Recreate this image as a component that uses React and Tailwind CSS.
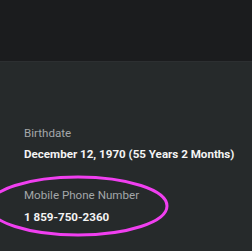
export default function App() {
  return (
    <div className="relative w-[252px] h-[251px] overflow-hidden bg-[#262a2b]" style={{ fontFamily: "Roboto, 'Noto Sans', sans-serif" }}>
      <div className="h-[62px] bg-[#1b1c1e] border-b border-[#2c2f31]" />
      <div className="px-6 pt-[63px] flex flex-col whitespace-nowrap">
        <div className="text-[11.6px] leading-[16px] text-[#a3a7a9]">Birthdate</div>
        <div className="mt-[5px] text-[11.6px] leading-[16px] font-bold text-[#f4f4f4]">December 12, 1970 (55 Years 2 Months)</div>
        <div className="mt-[25px] text-[11.6px] leading-[16px] text-[#a3a7a9]">Mobile Phone Number</div>
        <div className="mt-[6px] text-[11.6px] leading-[16px] font-bold text-[#f4f4f4]">1 859-750-2360</div>
      </div>
      <svg className="absolute left-0 top-0 pointer-events-none" width="252" height="251">
        <ellipse cx="78" cy="206" rx="89" ry="29" fill="none" stroke="#f03ff0" strokeWidth="3" />
      </svg>
    </div>
  );
}
